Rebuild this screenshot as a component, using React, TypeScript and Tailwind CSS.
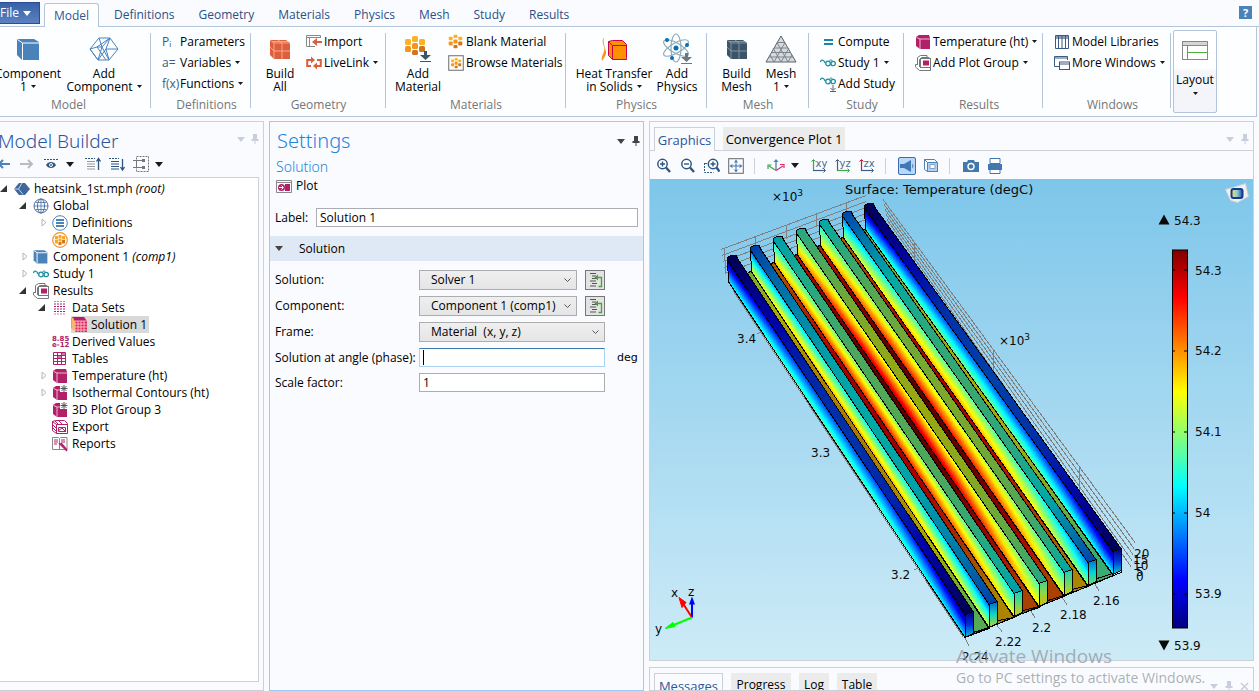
import React, { ReactNode } from "react";

/* ---------- colour map and heat sink geometry ---------- */

const STOPS: [number, number[]][] = [
  [0, [0, 0, 128]],
  [0.125, [0, 0, 255]],
  [0.375, [0, 255, 255]],
  [0.625, [255, 255, 0]],
  [0.875, [255, 0, 0]],
  [1, [128, 0, 0]],
];

function jet(value: number, shade = 1) {
  const t = Math.min(1, Math.max(0, value));
  let k = 0;
  while (k < STOPS.length - 2 && t > STOPS[k + 1][0]) k++;
  const [a, ca] = STOPS[k];
  const [b, cb] = STOPS[k + 1];
  const f = (t - a) / (b - a);
  const c = ca.map((v, i) => Math.round((v + (cb[i] - v) * f) * shade));
  return `rgb(${c[0]},${c[1]},${c[2]})`;
}

type Fin = {
  bl: [number, number];
  fl: [number, number];
  top: [number, number];
  base: [number, number];
};

/* bl / fl: upper left corners at the far and near end; top and base hold [end, middle] temperatures */
const FINS: Fin[] = [
  { bl: [727, 260], fl: [965, 615], top: [0, 0.2], base: [0.36, 0.46] },
  { bl: [750, 250], fl: [989, 605], top: [0.22, 0.38], base: [0.58, 0.72] },
  { bl: [773, 241], fl: [1014, 594], top: [0.36, 0.5], base: [0.64, 0.86] },
  { bl: [796, 233], fl: [1039, 584], top: [0.43, 0.6], base: [0.66, 0.96] },
  { bl: [819, 224], fl: [1064, 573], top: [0.38, 0.56], base: [0.62, 0.88] },
  { bl: [842, 216], fl: [1088, 563], top: [0.23, 0.46], base: [0.52, 0.72] },
  { bl: [864, 208], fl: [1113, 552], top: [0, 0.22], base: [0.38, 0.5] },
];
const FLOORS: [number, number][] = [
  [0.5, 0.7],
  [0.68, 0.9],
  [0.78, 1],
  [0.78, 1],
  [0.68, 0.88],
  [0.46, 0.62],
];
const POS = [0, 0.08, 0.18, 0.32, 0.5, 0.68, 0.82, 0.92, 1];
const hump = (s: number) => 1 - Math.pow(Math.abs(2 * s - 1), 2.2);

function LengthGradient({ id, fin, range, shade }: { id: string; fin: Fin; range: [number, number]; shade: number }) {
  return (
    <linearGradient id={id} gradientUnits="userSpaceOnUse" x1={fin.bl[0]} y1={fin.bl[1]} x2={fin.fl[0]} y2={fin.fl[1]}>
      {POS.map((s) => (
        <stop key={s} offset={s} stopColor={jet(range[0] + (range[1] - range[0]) * hump(s), shade)} />
      ))}
    </linearGradient>
  );
}

const STRIPS = 20;

function FinShape({ fin, index }: { fin: Fin; index: number }) {
  const [bx, by] = fin.bl;
  const [fx, fy] = fin.fl;
  const strips = Array.from({ length: STRIPS }, (_, k) => k);
  return (
    <g>
      <defs>
        <LengthGradient id={`top${index}`} fin={fin} range={fin.top} shade={0.66} />
        {strips.map((k) => {
          const h = (k + 0.5) / STRIPS;
          const r: [number, number] = [
            fin.top[0] + (fin.base[0] - fin.top[0]) * h,
            fin.top[1] + (fin.base[1] - fin.top[1]) * h,
          ];
          return <LengthGradient key={k} id={`side${index}-${k}`} fin={fin} range={r} shade={1} />;
        })}
        <linearGradient id={`end${index}`} x1="0" y1="0" x2="0" y2="1">
          <stop offset="0" stopColor={jet(fin.top[0] + 0.02, 0.82)} />
          <stop offset="0.5" stopColor={jet((fin.top[0] + fin.base[0]) / 2, 0.84)} />
          <stop offset="1" stopColor={jet(fin.base[0], 0.84)} />
        </linearGradient>
      </defs>
      {strips.map((k) => {
        const a = (k * 23) / STRIPS;
        const b = 23;
        return (
          <polygon
            key={k}
            points={`${bx + a / 12},${by + a} ${fx},${fy + a} ${fx},${fy + b} ${bx + b / 12},${by + b}`}
            fill={`url(#side${index}-${k})`}
          />
        );
      })}
      <path d={`M${bx} ${by}L${bx + 2} ${by + 23}L${fx} ${fy + 23}`} fill="none" stroke="#000" />
      <polygon
        points={`${bx},${by} ${bx},${by - 2} ${bx + 4},${by - 4} ${bx + 9},${by - 4} ${bx + 11},${by} ${fx + 8},${fy - 3} ${fx},${fy}`}
        fill={`url(#top${index})`}
        stroke="#000"
      />
      <polygon
        points={`${fx},${fy} ${fx + 8},${fy - 3} ${fx + 8},${fy + 19} ${fx},${fy + 23}`}
        fill={`url(#end${index})`}
        stroke="#000"
      />
    </g>
  );
}

function HeatSink() {
  return (
    <g shapeRendering="crispEdges">
      <g stroke="#808080" fill="none">
        {[0, 1, 2, 3, 4].map((k) => (
          <path key={k} d={`M${721 + k} ${250 + k * 6}L866 ${196 + k * 6}`} />
        ))}
        <path d="M724 248L726 273M755 237v13M786 226v13M816 214v13M846 203v13" />
        {[0, 1, 2, 3, 4].map((k) => (
          <path key={k} d={`M${883 + k} ${200 + k * 5}L${1135 - k} ${543 + k * 6}`} />
        ))}
        <path d="M914 242v22M993 351v22M1079 468v24" />
        <path d="M733 291L963 637M757 334l4 -1M837 447l4 -1M914 570l4 -1" />
        <path d="M1095 585l4 6M1062 598l5 7M1031 612l4 6M997 626l5 6M965 639l4 7" />
      </g>
      {FLOORS.map((range, i) => {
        const a = FINS[i];
        const b = FINS[i + 1];
        return (
          <g key={i}>
            <defs>
              <LengthGradient id={`floor${i}`} fin={a} range={range} shade={0.67} />
            </defs>
            <polygon
              points={`${b.bl[0] + 2},${b.bl[1] + 21} ${b.fl[0]},${b.fl[1] + 24} ${a.fl[0]},${a.fl[1] + 23} ${a.bl[0] + 8},${a.bl[1] + 16} ${b.bl[0] - 3},${b.bl[1] + 24}`}
              fill={`url(#floor${i})`}
              stroke="#000"
            />
          </g>
        );
      })}
      {FINS.map((_, i) => 6 - i).map((i) => (
        <FinShape key={i} fin={FINS[i]} index={i} />
      ))}
      <path
        d="M965 638L1121 573V570M973 633L989 628M998 621L1014 618M1023 611L1039 607M1048 601L1064 596M1072 590L1088 586M1097 579L1113 574"
        fill="none"
        stroke="#000"
      />
    </g>
  );
}

function Plot() {
  return (
    <svg
      viewBox="650 180 603 480"
      preserveAspectRatio="xMidYMid meet"
      className="block h-full w-full font-['DejaVu_Sans',sans-serif] text-[12px]"
      role="img"
      aria-label="Surface plot of temperature"
    >
      <defs>
        <linearGradient id="bar" x1="0" y1="1" x2="0" y2="0">
          {STOPS.map(([o]) => (
            <stop key={o} offset={o} stopColor={jet(o)} />
          ))}
        </linearGradient>
        <linearGradient id="badge" x1="0" y1="0" x2="1" y2="0">
          <stop offset="0" stopColor="#f8e060" />
          <stop offset="0.5" stopColor="#8fd0c8" />
          <stop offset="1" stopColor="#1b50b8" />
        </linearGradient>
      </defs>
      <HeatSink />
      <g fill="#0a0a0a">
        <text x="845" y="194" fontSize="13">Surface: Temperature (degC)</text>
        <text x="772" y="201">×10<tspan dy="-5" fontSize="9">3</tspan></text>
        <text x="999" y="345">×10<tspan dy="-5" fontSize="9">3</tspan></text>
        <text x="737" y="343">3.4</text>
        <text x="811" y="457">3.3</text>
        <text x="891" y="579">3.2</text>
        <text x="962" y="661">2.24</text>
        <text x="995" y="646">2.22</text>
        <text x="1032" y="632">2.2</text>
        <text x="1060" y="619">2.18</text>
        <text x="1093" y="605">2.16</text>
        <text x="1134" y="558">20</text>
        <text x="1133" y="564">15</text>
        <text x="1133" y="570">10</text>
        <text x="1136" y="576">5</text>
        <text x="1136" y="581">0</text>
        <text x="1174" y="225">54.3</text>
        <text x="1174" y="650">53.9</text>
        <text x="1195" y="275">54.3</text>
        <text x="1195" y="355">54.2</text>
        <text x="1195" y="436">54.1</text>
        <text x="1195" y="517">54</text>
        <text x="1195" y="598">53.9</text>
        <text x="671" y="597">x</text>
        <text x="688" y="596">z</text>
        <text x="655" y="633">y</text>
        <path d="M1164 215l5.500 10h-11zM1164 651l5.500 -10h-11z" />
      </g>
      <rect x="1172.500" y="250.500" width="15" height="378" fill="url(#bar)" stroke="#000" />
      <path
        d="M1173 270.500h2M1184 270.500h4M1173 351.500h2M1184 351.500h4M1173 432.500h2M1184 432.500h4M1173 513.500h2M1184 513.500h4M1173 594.500h2M1184 594.500h4"
        stroke="#000"
      />
      <path d="M692 618L683 604" stroke="#f00" strokeWidth="2" />
      <path d="M679 598l7 5l-4 5z" fill="#f00" stroke="#f00" />
      <path d="M692 618V602" stroke="#00f" strokeWidth="2" />
      <path d="M692 597l3 8h-6z" fill="#00f" />
      <path d="M692 618L670 627" stroke="#0f0" strokeWidth="2" />
      <path d="M665 629l8 -6l2 4z" fill="#0f0" stroke="#0f0" />
      <g>
        <path d="M1225.500 190l7 -2l13 -4l3 13l-11 6l-7 -2z" fill="#f1f1f1" stroke="#cfcfcf" />
        <rect x="1231.500" y="189.500" width="11" height="9" rx="2" fill="url(#badge)" stroke="#163a94" strokeWidth="2" />
      </g>
    </svg>
  );
}

/* ---------- icons ---------- */

function Ico({ w = 16, h = 16, box, children }: { w?: number; h?: number; box?: string; children: ReactNode }) {
  return (
    <svg width={w} height={h} viewBox={box ?? `0 0 ${w} ${h}`} className="shrink-0" fill="none" aria-hidden="true">
      {children}
    </svg>
  );
}

const Caret = ({ color = "#1a1a1a", w = 5 }: { color?: string; w?: number }) => (
  <svg width={w} height={w === 5 ? 3 : 5} viewBox="0 0 10 6" preserveAspectRatio="none" className="shrink-0" aria-hidden="true">
    <path d="M0 0h10L5 6z" fill={color} />
  </svg>
);

const Pin = ({ color }: { color: string }) => (
  <Ico w={8} h={10}>
    <path d="M2 0h4v5h1.500v2H.5V5H2zM3.500 7h1v3h-1z" fill={color} />
  </Ico>
);

const Cube = ({ size = 16, color = "#4a82ba", line = "#fff", edge }: { size?: number; color?: string; line?: string; edge?: string }) => (
  <Ico w={size} h={size} box="0 0 24 24">
    <path d="M1 2l17-0l5 3v18H6L1 18z" fill={color} stroke={edge} />
    <path d="M1.500 2.500L6.500 6M6.500 23V6H23" stroke={line} strokeWidth={size > 20 ? 1 : 1.5} />
  </Ico>
);

const Magenta = ({ star = false }: { star?: boolean }) => (
  <Ico>
    <path d="M1 3l3-2h10l1 3v11H5l-4-3z" fill="#b3206a" />
    <path d="M1.500 3.500L5 5h10M5 5v10" stroke="#eeb4cf" />
    {star && (
      <>
        <rect x="8" y="0" width="8" height="7" fill="#fff" />
        <path d="M12 0v7M8.500 3.500h7M9.500 1l5 5M14.500 1l-5 5" stroke="#555" />
      </>
    )}
  </Ico>
);

const GridCube = ({ color, line }: { color: string; line: string }) => (
  <Ico w={20} h={20}>
    <path d="M0 1h16l4 3v16H4L0 16z" fill={color} />
    <path d="M0 1l4 3h16M4 4v16M12 4v16M8 1l4 3M4 12h16M0 8l4 4M2 2.500h16" stroke={line} strokeWidth=".8" />
  </Ico>
);

const Nuggets = ({ size = 16, framed = false }: { size?: number; framed?: boolean }) => (
  <Ico w={size} h={size} box="0 0 22 22">
    {framed && <rect x="1" y="1" width="20" height="20" stroke="#777" strokeWidth="1.500" fill="#fff" />}
    <g transform={framed ? "translate(3.500 3.500) scale(.7)" : ""}>
      <g fill="#fcb223">
        <rect x="1" y="4" width="6" height="5" rx="1.500" />
        <rect x="8" y="1" width="6" height="5" rx="1.500" />
        <rect x="15" y="4" width="6" height="5" rx="1.500" />
      </g>
      <g fill="#f7941d">
        <rect x="1" y="11" width="6" height="6" rx="1.500" />
        <rect x="8" y="8" width="6" height="6" rx="1.500" />
      </g>
      <g fill="#d0761b">
        <rect x="15" y="11" width="6" height="6" rx="1.500" />
        <rect x="8" y="16" width="6" height="5" rx="1.500" />
      </g>
    </g>
  </Ico>
);

const AddMaterialIcon = () => (
  <Ico w={28} h={28}>
    <g fill="#fcb223">
      <rect x="1" y="4" width="6" height="6" rx="1.500" />
      <rect x="8" y="1" width="6" height="6" rx="1.500" />
      <rect x="15" y="4" width="6" height="6" rx="1.500" />
    </g>
    <g fill="#f7941d">
      <rect x="1" y="11" width="6" height="6" rx="1.500" />
      <rect x="8" y="8" width="6" height="6" rx="1.500" />
    </g>
    <g fill="#d0761b">
      <rect x="15" y="11" width="6" height="6" rx="1.500" />
      <rect x="8" y="15" width="6" height="5" rx="1.500" />
    </g>
    <path d="M20 16h3v4h4l-5.500 5L16 20h4zM16 26h11v1H16z" fill="#3d5468" />
  </Ico>
);

const AddComponentIcon = () => (
  <Ico w={30} h={24}>
    <path
      d="M1 12L10 1h11l8 11l-9 11H9zM10 1l3 9l8-9M1 12l7-2l13-9M8 10l5 0M1 12l8 11l8-11l12 0M9 23l4-13M17 12l3 11M13 10l7 13M8 10l9 13M17 12l4-11"
      stroke="#4a82ba"
    />
  </Ico>
);

const AtomIcon = () => (
  <Ico w={30} h={32}>
    <g stroke="#8dabb9" strokeWidth="1.200">
      <ellipse cx="14" cy="15" rx="5" ry="14" />
      <ellipse cx="14" cy="15" rx="5" ry="14" transform="rotate(60 14 15)" />
      <ellipse cx="14" cy="15" rx="5" ry="14" transform="rotate(120 14 15)" />
    </g>
    <g fill="#0a6db4">
      <circle cx="14" cy="15" r="2.500" />
      <circle cx="5" cy="7" r="2" />
      <circle cx="25" cy="12" r="2" />
      <circle cx="10" cy="25" r="2" />
    </g>
    <path d="M23 20h3v4h4l-5.500 5L19 24h4zM19 30h11v1H19z" fill="#6d7780" />
  </Ico>
);

const HeatIcon = () => (
  <Ico w={28} h={28}>
    <path d="M4 2c-4 6 2 9 0 14c-1 4-3 6-2 10c4-6 5-7 3-13C4 9 3 7 4 2z" fill="#f7941d" />
    <path d="M8.500 6.500l4-1h10l4 4v13l0 2H12.500l-4-4z" fill="#ff9100" stroke="#cc0050" />
    <path d="M8.500 6.500l4 4v14M12.500 10.500h14" stroke="#cc0050" />
  </Ico>
);

const MeshIcon = () => (
  <Ico w={32} h={28}>
    <path d="M16 1L31 27H1z" fill="#d8dadd" stroke="#566270" />
    <path
      d="M12 7.500h8M9 13h14M6.500 17.500h19M4 22h24M20 7.500L9 27M24 13L16 27M27 20L23 27M12 7.500L23 27M8 13L16 27M5 20l4 7"
      stroke="#7b848e"
    />
  </Ico>
);

const StudyIcon = ({ add = false }: { add?: boolean }) => (
  <Ico>
    <g transform={add ? "translate(0 -3)" : ""}>
      <path d="M0 7c2-3 4-2 5 1" stroke="#1b8fa3" strokeWidth="1.300" />
      <circle cx="8" cy="8.500" r="2.300" stroke="#1b8fa3" strokeWidth="1.300" />
      <circle cx="13.200" cy="8.500" r="2.200" stroke="#1b8fa3" strokeWidth="1.300" />
      <path d="M9.500 6.500c0-2 3-2 3 0" stroke="#1b8fa3" />
    </g>
    {add && <path d="M13 9v5M10.500 12l2.500 2.500l2.500-2.500M10 15.500h6" stroke="#566270" />}
  </Ico>
);

const ResultsIcon = () => (
  <Ico>
    <path d="M.5 9.500v2.500l4 3.500h11v-2.500M2.500 10V2.500l3-2h6.500v2M4.500 12V4.500l2-2H14v1M.5 9.500h2" stroke="#777" />
    <rect x="5.500" y="3.500" width="10" height="9" fill="#fff" stroke="#777" />
    <rect x="8" y="5.500" width="6" height="5" fill="#b3206a" />
  </Ico>
);

const ImportIcon = () => (
  <Ico>
    <path d="M14.500 4V1.500h-14v11H9M.5 3.500h14M3.500 4v8" stroke="#888" />
    <path d="M16 8H9" stroke="#dd5f3b" strokeWidth="2" />
    <path d="M6 8l5-4v8z" fill="#dd5f3b" />
  </Ico>
);

const LinkIcon = () => (
  <Ico>
    <path d="M5 11H1.200V5H6M11 5h3.800v6H10" stroke="#dd5f3b" strokeWidth="2" />
    <path d="M5 1.500L9 5L5 8.500zM11 7.500v7L7 11z" fill="#dd5f3b" />
  </Ico>
);

const LibrariesIcon = () => (
  <Ico>
    <path d="M1.500 1.500h13v13h-13zM4.500 2v12M8 2v12M11.500 2v12" stroke="#3c5a80" />
    <path d="M2 2h12v3H2z" fill="#3c5a80" opacity=".6" />
  </Ico>
);

const WindowsIcon = () => (
  <Ico>
    <path d="M5 11.500H.5v-10h13V5M.5 3h13" stroke="#3c5a80" />
    <rect x="5.500" y="7" width="10" height="7.500" fill="#fff" stroke="#3c5a80" />
    <path d="M5.500 9h10" stroke="#3c5a80" />
  </Ico>
);

const LayoutIcon = () => (
  <Ico w={26} h={19}>
    <rect x=".5" y=".5" width="25" height="18" fill="#fff" stroke="#888" />
    <path d="M1 1h24v3H1z" fill="#d5d5d5" />
    <path d="M1 4.500h24" stroke="#888" />
    <path d="M5.500 5v13M6 11.500h19" stroke="#4caf3c" />
  </Ico>
);

const RootIcon = () => (
  <Ico>
    <path d="M0 8l5-6h6l5 6l-5 6H5z" fill="#3f679c" />
    <path d="M8 2L4.500 8L9 13.500M0 8h4.500" stroke="#c5d5ea" />
  </Ico>
);

const GlobeIcon = () => (
  <Ico>
    <circle cx="8" cy="8" r="7" stroke="#4a6fa5" />
    <ellipse cx="8" cy="8" rx="3.500" ry="7" stroke="#4a6fa5" />
    <path d="M8 1v14M1 8h14M2.500 4.500h11M2.500 11.500h11" stroke="#4a6fa5" strokeWidth=".8" />
  </Ico>
);

const DefsIcon = () => (
  <Ico>
    <circle cx="8" cy="8" r="7.300" stroke="#4a82ba" />
    <path d="M4 5h8M4 8h8M4 11h8" stroke="#4a82ba" strokeWidth="1.800" />
  </Ico>
);

const MatsIcon = () => (
  <Ico>
    <circle cx="8" cy="8" r="7.300" stroke="#f0932b" strokeWidth="1.200" />
    <path d="M3 4h3v3.500H3zM6.500 3h3v3h-3zM10 4h3v3.500h-3zM3 8h3v3.500H3zM6.500 6.500h3v3h-3z" fill="#f9a825" />
    <path d="M10 8h3v3.500h-3zM6.500 10h3v3h-3z" fill="#d0761b" />
  </Ico>
);

const DataSetsIcon = () => (
  <Ico>
    <path d="M2 1.500h12" stroke="#999" strokeDasharray="2 1" />
    <path d="M2 4h12M2 6.500h12M2 9h12M2 11.500h12" stroke="#b3206a" strokeDasharray="2 1" />
    <path d="M2 14h12" stroke="#b3206a" strokeDasharray="2 1" opacity=".6" />
  </Ico>
);

const SolutionIcon = () => (
  <Ico>
    <path d="M0 1h4v13L0 11z" fill="#f7a233" />
    <path d="M1 0h12l3 4H4z" fill="#b3206a" />
    <path d="M4 4h12v11H4z" fill="#e0245a" />
    <path d="M7 4v11M10 4v11M13 4v11M4 7h12M4 10h12M4 13h12M2 1v11M4 4v11M4 4h12" stroke="#ffd5d5" strokeWidth=".8" />
  </Ico>
);

const TablesIcon = () => (
  <Ico>
    <path d="M1.500 1.500h12v12h-12zM1.500 4.500h12M1.500 7.500h12M1.500 10.500h12M5.500 1v12M9.500 1v12" stroke="#b3206a" />
    <path d="M6 5h3v2H6zM10 2h3v2h-3z" fill="#b3206a" opacity=".6" />
  </Ico>
);

const ExportIcon = () => (
  <Ico>
    <path d="M.5 2.500l3-1h9l3 3v10h-11l-4-3z" stroke="#b3206a" />
    <path d="M.5 2.500l4 3h11M4.500 5.500v9M1 6l3 3M1 9l3 3M3 2l3 3M7 2l3 3" stroke="#b3206a" />
    <path d="M6.500 8.500h7v4h-7zM6 12l4-3l4 4" stroke="#b3206a" />
  </Ico>
);

const ReportsIcon = () => (
  <Ico>
    <path d="M.5 1.500h6l1 1l1-1h6.500v12H.5zM7.500 2v11" stroke="#888" />
    <path d="M2 4h4M2 6h4M2 8h3M9 4h4M9 6h4" stroke="#b3206a" />
    <path d="M7 7l8 8M9 7l6 7" stroke="#b3206a" strokeWidth="1.500" />
  </Ico>
);

const PlotIcon = () => (
  <Ico>
    <path d="M.5 2.500h15v12H.5zM.5 4.500h15" stroke="#888" />
    <path d="M9 6h5v7H9z" fill="#b3206a" />
    <circle cx="5.500" cy="9.500" r="3.500" fill="#b3206a" />
    <path d="M3 9.500h4M5.500 7.500l2 2l-2 2" stroke="#fff" />
  </Ico>
);

const GoToIcon = () => (
  <Ico>
    <path d="M3 1.500h6M5 4h4M5 6.500h5M3 9h6M5 11.500h5M3 14h6" stroke="#555" />
    <path d="M11.500 14.500h3v-9H9" stroke="#4b9e3f" strokeWidth="1.300" />
    <path d="M11 2.500L7.500 5.500l3.500 3z" fill="#4b9e3f" />
  </Ico>
);

const Lens = ({ minus = false, box = false }: { minus?: boolean; box?: boolean }) => (
  <Ico>
    {box && <path d="M.5 5v9.500h9M1 5.500h4" stroke="#2e5c8a" strokeDasharray="2 1" />}
    <circle cx={box ? 9 : 6.500} cy="6" r="4.700" stroke="#2f5680" strokeWidth="1.500" fill="#fff" />
    <path d={box ? "M12.500 9.500l3 4" : "M10 9.500l4 4.500"} stroke="#2f5680" strokeWidth="2.400" />
    <path d={box ? "M6.500 6h5M9 3.500v5" : minus ? "M4 6h5" : "M4 6h5M6.500 3.500v5"} stroke="#2f5680" strokeWidth="1.400" />
  </Ico>
);

const ExtentsIcon = () => (
  <Ico>
    <rect x=".7" y=".7" width="14.600" height="14.600" stroke="#666" />
    <path d="M8 1.500l2 3H6zM8 14.500l2-3H6zM1.500 8l3-2v4zM14.500 8l-3-2v4zM7.500 5h1v6h-1zM5 7.500h6v1H5z" fill="#3d74ad" />
  </Ico>
);

const AxesIcon = () => (
  <Ico w={18} h={16}>
    <path d="M9 2v10" stroke="#4a82ba" strokeWidth="1.300" />
    <path d="M9 1l2.500 3h-5z" fill="#4a82ba" />
    <path d="M9 12.500L2 8M1 11V7h3.500" stroke="#3fa64b" strokeWidth="1.200" />
    <path d="M9 12.500L16 8M13 6.500h4v3.500" stroke="#e0316a" strokeWidth="1.200" />
  </Ico>
);

const PlaneIcon = ({ label, v, h }: { label: string; v: string; h: string }) => (
  <Ico w={17} h={16}>
    <path d="M2.500 2v11" stroke={v} strokeWidth="1.200" />
    <path d="M.5 3.500l2-2l2 2" stroke={v} />
    <path d="M2 12.500h12" stroke={h} strokeWidth="1.200" />
    <path d="M12.500 10.500l2 2l-2 2" stroke={h} />
    <text x="4.500" y="8.500" fontSize="10" fill="#4c6a90" className="font-['DejaVu_Sans',sans-serif]">{label}</text>
  </Ico>
);

const LightIcon = () => (
  <Ico>
    <path d="M1 6h4l7-4v12l-7-4H1z" fill="#3f78b4" />
    <path d="M13 5.500c2 1 2 4 0 5z" fill="#3f78b4" opacity=".7" />
  </Ico>
);

const BoxIcon = () => (
  <Ico>
    <path d="M4.500 4.500h10v9h-10z" fill="#b8d0e8" />
    <path d="M1.500 1.500h10l3 3v9h-10l-3-2zM4.500 4.500h10v9h-10zM1.500 1.500l3 3" stroke="#4a82ba" />
    <path d="M7 6.500h5v4H7z" fill="#fff" stroke="#7ba5cf" />
  </Ico>
);

const CameraIcon = () => (
  <Ico>
    <path d="M0 4h4l1-2h6l1 2h4v10H0z" fill="#4378ae" />
    <circle cx="8" cy="8.500" r="3" fill="#4378ae" stroke="#fff" strokeWidth="1.400" />
  </Ico>
);

const PrinterIcon = () => (
  <Ico>
    <path d="M3 .5h10v5H3z" fill="#fff" stroke="#4378ae" />
    <path d="M1 6h14v6H1z" fill="#4378ae" />
    <path d="M3 11.500h10v4H3z" fill="#fff" stroke="#4378ae" />
  </Ico>
);

/* ---------- ribbon ---------- */

function Group({ title, className, children }: { title: string; className: string; children: ReactNode }) {
  return (
    <section aria-label={title} className={`relative flex shrink-0 flex-col pt-1 ${className}`}>
      <div className="flex h-[66px] items-start">{children}</div>
      <div className="text-center leading-4 text-[#767676]">{title}</div>
      <span className="absolute top-[6px] right-0 h-[75px] w-px bg-[#b4c5da]" />
    </section>
  );
}

function Big({ icon, lines, menu, className }: { icon: ReactNode; lines: string[]; menu?: boolean; className: string }) {
  return (
    <button type="button" className={`flex shrink-0 flex-col items-center whitespace-nowrap ${className}`}>
      <span className="flex h-9 items-center justify-center">{icon}</span>
      <span className="leading-[13px]">{lines[0]}</span>
      <span className="flex items-center gap-1 leading-[13px]">
        {lines[1]}
        {menu && <Caret />}
      </span>
    </button>
  );
}

function Small({ icon, text, menu }: { icon: ReactNode; text: string; menu?: boolean }) {
  return (
    <button type="button" className="flex h-[21px] items-center gap-[2px] whitespace-nowrap">
      <span className="flex w-4 items-center justify-start text-[#3c5a80]">{icon}</span>
      {text}
      {menu && (
        <span className="ml-[2px]">
          <Caret />
        </span>
      )}
    </button>
  );
}

const TABS = ["Definitions", "Geometry", "Materials", "Physics", "Mesh", "Study", "Results"];

function Ribbon() {
  return (
    <header>
      <nav className="flex h-[27px] items-end border-b border-[#b4c5da] pt-[2px]">
        <button type="button" className="mb-[2px] -ml-1 flex h-[22px] w-11 items-center gap-1 border border-[#2a4d94] bg-linear-to-b from-[#3761a8] to-[#5b82c0] pl-[3px] text-white">
          File <Caret color="#fff" w={8} />
        </button>
        <button type="button" className="-mb-px ml-1 h-6 w-[55px] rounded-t-[3px] border border-b-0 border-[#b4c5da] bg-white pt-px text-[#2b579a]">Model</button>
        <div className="ml-[15px] flex h-[22px] items-center gap-6 text-[#2b4f86]">
          {TABS.map((t) => (
            <button type="button" key={t}>{t}</button>
          ))}
        </div>
        <button type="button" aria-label="Help" className="mr-[7px] mb-[7px] ml-auto size-[13px] bg-[#4a82ba] text-[11px] leading-[13px] font-bold text-white">?</button>
      </nav>
      <div className="mr-[2px] flex h-[90px] overflow-hidden border-r border-b border-[#b4c5da] bg-[#fdfeff]">
        <Group title="Model" className="-ml-[14px] w-[165px]">
          <Big className="ml-[6px] w-[72px]" icon={<Cube size={24} />} lines={["Component", "1"]} menu />
          <Big className="w-[80px]" icon={<AddComponentIcon />} lines={["Add", "Component"]} menu />
        </Group>
        <Group title="Definitions" className="w-[100px] pl-[11px]">
          <div>
            <Small icon="Pᵢ" text="Parameters" />
            <Small icon="a=" text="Variables" menu />
            <Small icon="f(x)" text="Functions" menu />
          </div>
        </Group>
        <Group title="Geometry" className="w-[135px]">
          <Big className="ml-1 w-[50px]" icon={<GridCube color="#dd5f3b" line="#fbb9a2" />} lines={["Build", "All"]} />
          <div className="ml-px">
            <Small icon={<ImportIcon />} text="Import" />
            <Small icon={<LinkIcon />} text="LiveLink" menu />
          </div>
        </Group>
        <Group title="Materials" className="w-[180px]">
          <Big className="ml-[7px] w-[50px]" icon={<AddMaterialIcon />} lines={["Add", "Material"]} />
          <div className="ml-[5px]">
            <Small icon={<Nuggets size={15} />} text="Blank Material" />
            <Small icon={<Nuggets framed />} text="Browse Materials" />
          </div>
        </Group>
        <Group title="Physics" className="w-[141px]">
          <Big className="ml-[9px] w-[78px]" icon={<HeatIcon />} lines={["Heat Transfer", "in Solids"]} menu />
          <Big className="w-[48px]" icon={<AtomIcon />} lines={["Add", "Physics"]} />
        </Group>
        <Group title="Mesh" className="w-[102px]">
          <Big className="ml-[7px] w-[45px]" icon={<GridCube color="#3d5468" line="#93a3b1" />} lines={["Build", "Mesh"]} />
          <Big className="w-[44px]" icon={<MeshIcon />} lines={["Mesh", "1"]} menu />
        </Group>
        <Group title="Study" className="w-[95px] pl-[11px]">
          <div>
            <Small icon={<Ico><path d="M4 6h9M4 10h9" stroke="#1787a8" strokeWidth="2" /></Ico>} text="Compute" />
            <Small icon={<StudyIcon />} text="Study 1" menu />
            <Small icon={<StudyIcon add />} text="Add Study" />
          </div>
        </Group>
        <Group title="Results" className="w-[139px] pl-[11px]">
          <div>
            <Small icon={<Magenta />} text="Temperature (ht)" menu />
            <Small icon={<ResultsIcon />} text="Add Plot Group" menu />
          </div>
        </Group>
        <Group title="Windows" className="w-[128px] pl-[11px]">
          <div>
            <Small icon={<LibrariesIcon />} text="Model Libraries" />
            <Small icon={<WindowsIcon />} text="More Windows" menu />
          </div>
        </Group>
        <button type="button" className="mt-[3px] ml-[2px] flex h-[83px] w-11 shrink-0 flex-col items-center rounded-[2px] border border-[#b4c5da] bg-linear-to-b from-white from-45% to-[#f3f5fa] to-50% pt-[10px]">
          <LayoutIcon />
          <span className="mt-3 mb-1 leading-4">Layout</span>
          <Caret />
        </button>
      </div>
    </header>
  );
}

/* ---------- model tree ---------- */

type Row = { depth: number; icon: ReactNode; text: string; tag?: string; open?: boolean; selected?: boolean };

const ROWS: Row[] = [
  { depth: 0, icon: <RootIcon />, text: "heatsink_1st.mph", tag: "(root)", open: true },
  { depth: 1, icon: <GlobeIcon />, text: "Global", open: true },
  { depth: 2, icon: <DefsIcon />, text: "Definitions", open: false },
  { depth: 2, icon: <MatsIcon />, text: "Materials" },
  { depth: 1, icon: <Cube size={15} />, text: "Component 1", tag: "(comp1)", open: false },
  { depth: 1, icon: <StudyIcon />, text: "Study 1", open: false },
  { depth: 1, icon: <ResultsIcon />, text: "Results", open: true },
  { depth: 2, icon: <DataSetsIcon />, text: "Data Sets", open: true },
  { depth: 3, icon: <SolutionIcon />, text: "Solution 1", selected: true },
  {
    depth: 2,
    icon: (
      <span className="block w-4 font-['DejaVu_Sans',sans-serif] text-[7px] leading-[6px] font-bold text-[#b3206a]">
        8.85
        <br />
        e-12
      </span>
    ),
    text: "Derived Values",
  },
  { depth: 2, icon: <TablesIcon />, text: "Tables" },
  { depth: 2, icon: <Magenta />, text: "Temperature (ht)", open: false },
  { depth: 2, icon: <Magenta star />, text: "Isothermal Contours (ht)", open: false },
  { depth: 2, icon: <Magenta star />, text: "3D Plot Group 3" },
  { depth: 2, icon: <ExportIcon />, text: "Export" },
  { depth: 2, icon: <ReportsIcon />, text: "Reports" },
];

const INDENT = ["pl-0", "pl-[19px]", "pl-[38px]", "pl-[57px]"];

function Tree() {
  return (
    <ul className="min-h-0 flex-1 border-t border-r border-b border-[#ccd0d8] bg-white pt-[2px]">
      {ROWS.map((r, i) => (
        <li key={i} className={`flex h-[17px] items-center whitespace-nowrap ${INDENT[r.depth]}`}>
          <span className="flex w-[14px] shrink-0 items-center">
            {r.open === true && (
              <Ico w={8} h={8}>
                <path d="M7 0v7H0z" fill="#333" />
              </Ico>
            )}
            {r.open === false && (
              <span className="ml-[3px]">
                <Ico w={6} h={9}>
                  <path d="M1 1l4 3.500L1 8z" stroke="#b5b5b5" fill="#fff" />
                </Ico>
              </span>
            )}
          </span>
          <span className={`flex h-[17px] items-center gap-1 ${r.selected ? "bg-[#d9d9d9] pr-[2px]" : ""}`}>
            <span className="flex w-4 shrink-0">{r.icon}</span>
            <span>
              {r.text} {r.tag && <i>{r.tag}</i>}
            </span>
          </span>
        </li>
      ))}
    </ul>
  );
}

function ModelBuilder() {
  return (
    <section className="flex w-[264px] shrink-0 flex-col border-t border-r border-b border-[#ccd0d8] pb-2">
      <div className="flex h-[34px] items-center pr-1">
        <h2 className="-ml-[2px] pt-1 font-['Noto_Sans',sans-serif] text-[19px] leading-7 font-light text-[#2b579a]">Model Builder</h2>
        <span className="ml-auto flex items-center gap-[6px]">
          <Caret color="#c8cedb" w={8} />
          <Pin color="#c8cedb" />
        </span>
      </div>
      <div className="flex h-[21px] items-start text-[#2f5680]">
        <button type="button" aria-label="Back" className="-ml-1">
          <Ico w={14}><path d="M14 8H3M7 4L3 8l4 4" stroke="#4a82ba" strokeWidth="2" /></Ico>
        </button>
        <button type="button" aria-label="Forward" className="ml-[10px]">
          <Ico w={14}><path d="M0 8h11M8 4l4 4l-4 4" stroke="#bbb" strokeWidth="2" /></Ico>
        </button>
        <button type="button" aria-label="Show" className="ml-[9px] flex items-center gap-[7px]">
          <Ico>
            <path d="M1 3.500h14" stroke="#2f5680" strokeDasharray="2 1" />
            <path d="M3 9c2-4 8-4 10 0c-2 4-8 4-10 0z" fill="#2f5680" />
            <circle cx="8" cy="9" r="1.500" stroke="#fff" />
          </Ico>
          <Caret w={8} />
        </button>
        <button type="button" aria-label="Collapse all" className="ml-[11px]">
          <Ico>
            <path d="M0 2.500h10" stroke="#2f5680" strokeDasharray="2 1" />
            <path d="M2 5.500h8M2 8h8M2 10.500h8M2 13h8" stroke="#999" />
            <path d="M13.500 14V3M11.500 5.500l2-3l2 3" stroke="#2f5680" strokeWidth="1.300" />
          </Ico>
        </button>
        <button type="button" aria-label="Expand all" className="ml-2">
          <Ico>
            <path d="M0 2.500h10" stroke="#2f5680" strokeDasharray="2 1" />
            <path d="M2 5.500h8M2 8h8M2 10.500h8M2 13h8" stroke="#2f5680" />
            <path d="M13.500 3v11M11.500 11l2 3l2-3" stroke="#2f5680" strokeWidth="1.300" />
          </Ico>
        </button>
        <button type="button" aria-label="Model tree" className="ml-2 flex items-center gap-[6px]">
          <Ico>
            <path d="M3.500.5h12v15h-12z" stroke="#777" strokeDasharray="2 1" />
            <path d="M0 4.500h10M0 11.500h10M3.500 4v8" stroke="#777" />
            <path d="M9 3h3v3H9zM9 10h3v3H9z" fill="#777" />
          </Ico>
          <Caret w={8} />
        </button>
      </div>
      <div className="flex min-h-0 flex-1 pr-1">
        <div className="flex min-w-0 flex-1 flex-col overflow-hidden">
          <Tree />
        </div>
      </div>
    </section>
  );
}

/* ---------- settings ---------- */

function Drop({ id, value }: { id: string; value: string }) {
  return (
    <span className="relative flex flex-1 items-center">
      <select id={id} defaultValue={value} className="h-5 w-full appearance-none border border-[#adadad] bg-linear-to-b from-[#efefef] to-[#e5e5e5] pl-[11px]">
        <option value={value}>{value}</option>
      </select>
      <svg width="7" height="5" viewBox="0 0 7 5" className="pointer-events-none absolute right-[6px]" fill="none" aria-hidden="true">
        <path d="M.5 .5l3 3l3-3" stroke="#555" />
      </svg>
    </span>
  );
}

const GoTo = ({ label }: { label: string }) => (
  <button type="button" aria-label={label} className="ml-2 flex size-5 shrink-0 items-center justify-center border border-[#777] bg-[#e3e3e3]">
    <GoToIcon />
  </button>
);

function Field({ id, label, unit, children }: { id: string; label: string; unit?: string; children: ReactNode }) {
  return (
    <div className="flex items-center">
      <label htmlFor={id} className="w-[144px] shrink-0 whitespace-nowrap">{label}</label>
      <div className="flex w-[186px] items-center">{children}</div>
      {unit && <span className="ml-3 font-['DejaVu_Sans',sans-serif] text-[11px]">{unit}</span>}
    </div>
  );
}

function Settings() {
  return (
    <section className="ml-[5px] w-[375px] shrink-0 border border-[#99cdf6]">
      <div className="flex items-center pt-[5px] pr-[3px] pl-[7px]">
        <h2 className="font-['Noto_Sans',sans-serif] text-[20px] leading-7 font-light text-[#1a86e0]">Settings</h2>
        <span className="ml-auto flex items-center gap-[7px]">
          <Caret color="#444" w={8} />
          <Pin color="#444" />
        </span>
      </div>
      <h3 className="pt-px pl-[6px] font-['Noto_Sans',sans-serif] text-[14px] leading-[22px] font-light text-[#1a86e0]">Solution</h3>
      <button type="button" className="ml-[6px] flex h-4 items-center gap-1"><PlotIcon />Plot</button>
      <div className="mt-[14px] flex items-center pr-[5px] pl-[5px]">
        <label htmlFor="name" className="w-[41px]">Label:</label>
        <input id="name" defaultValue="Solution 1" className="h-[19px] min-w-0 flex-1 border border-[#abadb3] bg-white px-[3px]" />
      </div>
      <h3 className="mt-[9px] flex h-[25px] items-center gap-4 bg-[#dfe8f5] pl-[5px] leading-4">
        <Caret color="#444" w={8} />Solution
      </h3>
      <div className="flex flex-col gap-[6px] pt-[9px] pl-[5px]">
        <Field id="sol" label="Solution:"><Drop id="sol" value="Solver 1" /><GoTo label="Go to solution" /></Field>
        <Field id="comp" label="Component:"><Drop id="comp" value="Component 1 (comp1)" /><GoTo label="Go to component" /></Field>
        <Field id="frame" label="Frame:"><Drop id="frame" value={"Material\u00a0 (x, y, z)"} /></Field>
        <Field id="phase" label="Solution at angle (phase):" unit="deg">
          <span className="relative flex flex-1 items-center">
            <input id="phase" className="h-[19px] w-full border border-[#a9d3f0] border-t-[#3d7bad] bg-white px-[3px]" />
            <span className="pointer-events-none absolute left-1 h-[15px] w-px bg-black" />
          </span>
        </Field>
        <Field id="scale" label="Scale factor:">
          <input id="scale" defaultValue="1" className="h-[19px] w-full border border-[#abadb3] bg-white px-[3px]" />
        </Field>
      </div>
    </section>
  );
}

/* ---------- graphics ---------- */

const Sep = ({ className }: { className: string }) => <span className={`h-4 w-px bg-[#ccd0d8] ${className}`} />;

function ToolButton({ label, className = "", children }: { label: string; className?: string; children: ReactNode }) {
  return (
    <button type="button" aria-label={label} className={`flex shrink-0 items-center gap-[6px] ${className}`}>{children}</button>
  );
}

function Graphics() {
  return (
    <section className="flex min-h-0 flex-1 flex-col border border-[#ccd0d8]">
      <div className="flex h-[29px] shrink-0 items-end border-b border-[#ccd0d8] pr-1 pl-1">
        <button type="button" className="-mb-px h-6 w-[61px] border border-b-0 border-[#ccd0d8] bg-[#fafbff] text-[13px] text-[#2b579a]">Graphics</button>
        <button type="button" className="ml-2 h-[23px] w-[122px] bg-[#ebebeb] text-[13px] whitespace-nowrap">Convergence Plot 1</button>
        <span className="mb-[6px] ml-auto flex items-center gap-[7px]"><Caret color="#c8cedb" w={8} /><Pin color="#c8cedb" /></span>
      </div>
      <div className="flex h-7 shrink-0 items-center pt-px pl-[6px]">
        <ToolButton label="Zoom in"><Lens /></ToolButton>
        <ToolButton label="Zoom out" className="ml-2"><Lens minus /></ToolButton>
        <ToolButton label="Zoom box" className="ml-2"><Lens box /></ToolButton>
        <ToolButton label="Zoom extents" className="ml-2"><ExtentsIcon /></ToolButton>
        <Sep className="ml-[10px]" />
        <ToolButton label="Default view" className="ml-3"><AxesIcon /><Caret w={8} /></ToolButton>
        <ToolButton label="XY view" className="ml-3"><PlaneIcon label="xy" v="#3fa64b" h="#3d5f8a" /></ToolButton>
        <ToolButton label="YZ view" className="ml-[7px]"><PlaneIcon label="yz" v="#3d5f8a" h="#3fa64b" /></ToolButton>
        <ToolButton label="ZX view" className="ml-[7px]"><PlaneIcon label="zx" v="#c02030" h="#3d5f8a" /></ToolButton>
        <Sep className="ml-[9px]" />
        <ToolButton label="Scene light" className="ml-3 h-[18px] w-[18px] justify-center rounded-[2px] border border-[#3c6eae] bg-[#b7d8f8]"><LightIcon /></ToolButton>
        <ToolButton label="Transparency" className="ml-[7px]"><BoxIcon /></ToolButton>
        <Sep className="ml-[10px]" />
        <ToolButton label="Snapshot" className="ml-[13px]"><CameraIcon /></ToolButton>
        <ToolButton label="Print" className="ml-2"><PrinterIcon /></ToolButton>
      </div>
      <div className="min-h-0 flex-1 bg-linear-to-b from-[#7dc6ea] to-[#cdebf7]"><Plot /></div>
    </section>
  );
}

function Messages() {
  return (
    <section className="mt-[6px] flex h-6 shrink-0 items-start gap-2 overflow-hidden border border-[#ccd0d8] px-1 pt-[5px] text-[12px]">
      <button type="button" className="h-[25px] w-[69px] shrink-0 border border-[#ccd0d8] text-[13px] text-[#2b579a]">Messages</button>
      <button type="button" className="h-6 w-[60px] shrink-0 bg-[#ebebeb]">Progress</button>
      <button type="button" className="h-6 w-[30px] shrink-0 bg-[#ebebeb]">Log</button>
      <button type="button" className="h-6 w-10 shrink-0 bg-[#ebebeb]">Table</button>
      <span className="mt-2 ml-auto flex items-center gap-[7px]">
        <Caret color="#c8cedb" w={8} />
        <Pin color="#c8cedb" />
        <Ico w={9} h={9}><path d="M1 1l7 7M8 1L1 8" stroke="#c8cedb" strokeWidth="1.500" /></Ico>
      </span>
    </section>
  );
}

export default function App() {
  return (
    <div className="relative flex h-screen flex-col overflow-hidden bg-[#fafbff] font-['Open_Sans','Noto_Sans',sans-serif] text-[12px] leading-4 text-black">
      <Ribbon />
      <main className="flex min-h-0 flex-1 pt-1">
        <ModelBuilder />
        <Settings />
        <div className="ml-[5px] flex min-w-0 flex-1 flex-col pr-[5px]">
          <Graphics />
          <Messages />
        </div>
      </main>
      <div className="pointer-events-none absolute right-[47px] bottom-[3px] w-[256px] whitespace-nowrap text-[#8f979c]/75">
        <div className="text-[19px] leading-6">Activate Windows</div>
        <div className="text-[14px] leading-5">Go to PC settings to activate Windows.</div>
      </div>
    </div>
  );
}
